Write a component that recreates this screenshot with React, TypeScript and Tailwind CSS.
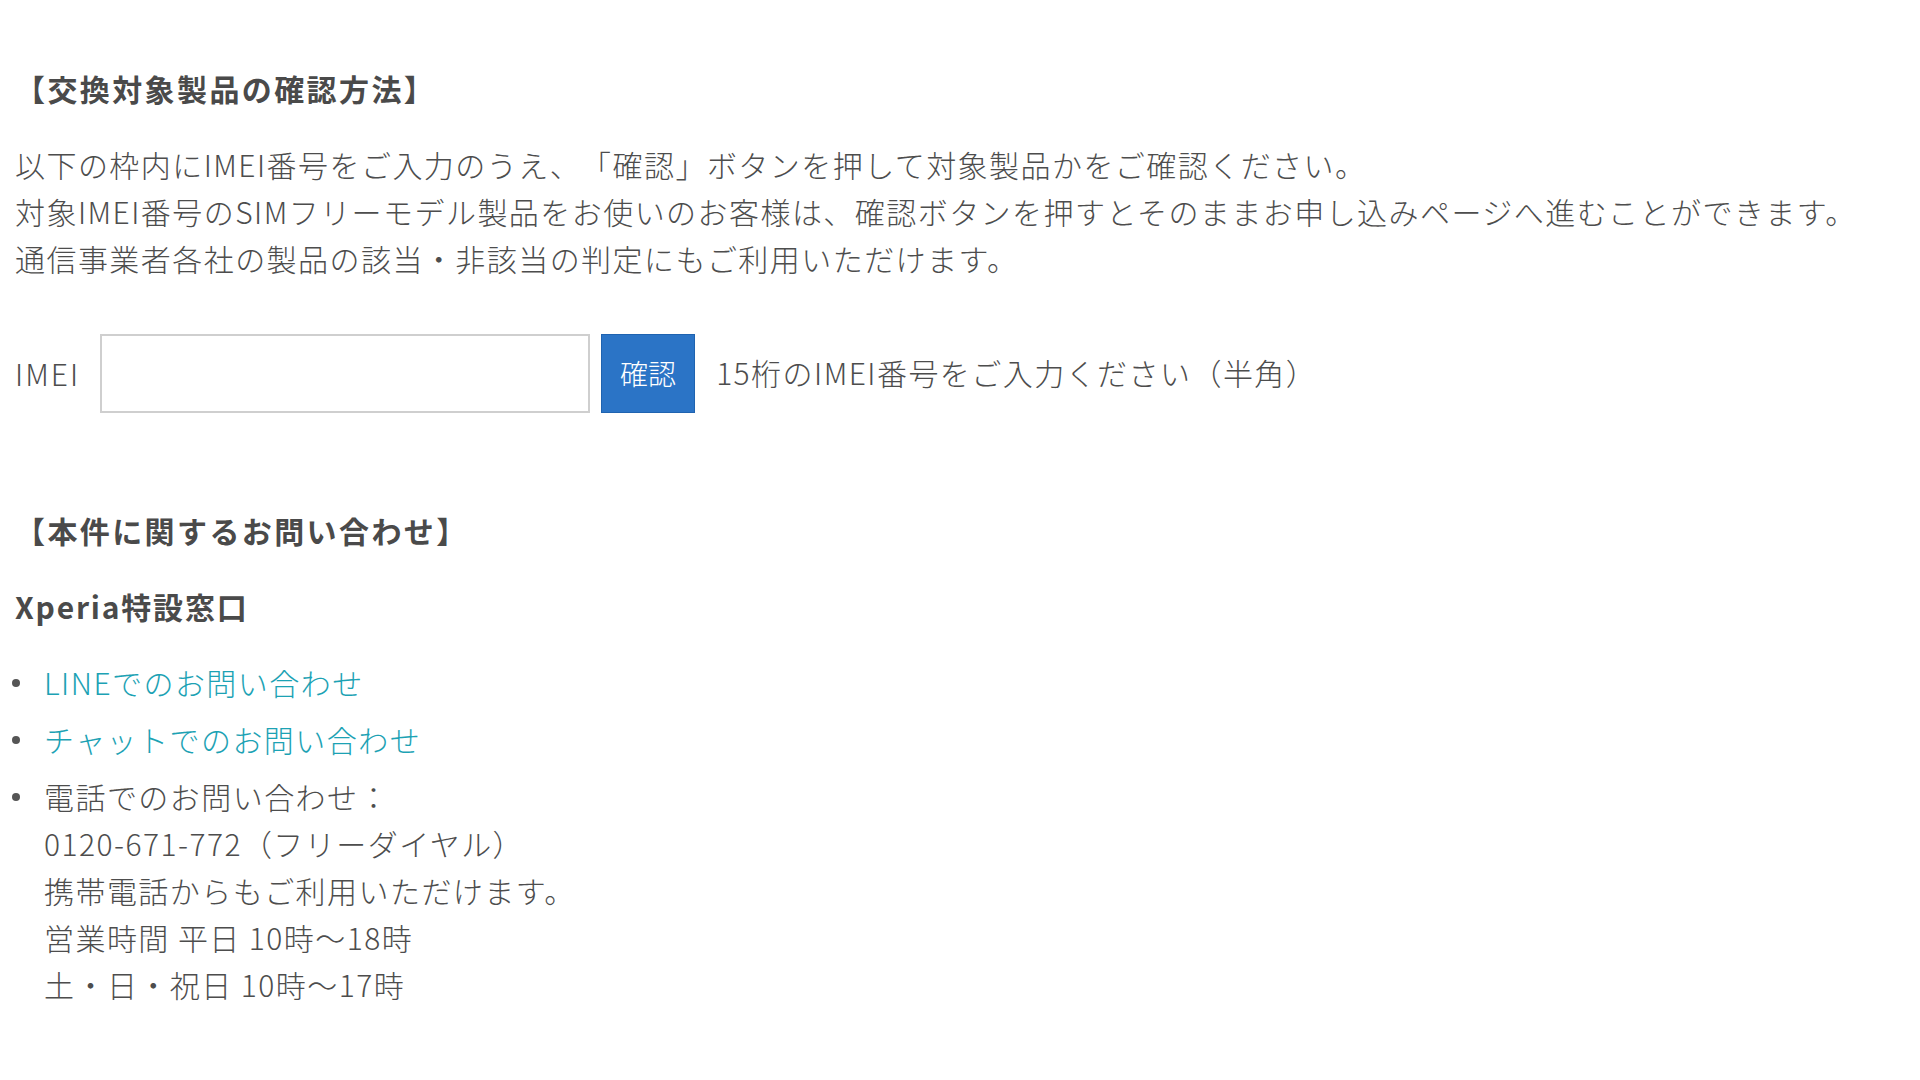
import React from "react";

const font = {
  fontFamily: '"Noto Sans CJK JP", "Noto Sans", sans-serif',
};

function Bullet() {
  return (
    <span className="flex h-[47px] w-[29px] shrink-0 items-center">
      <span className="-ml-[3.5px] h-[8px] w-[8px] rounded-full bg-[#555]" />
    </span>
  );
}

export default function App() {
  return (
    <div
      className="min-h-[1080px] w-[1920px] bg-white px-[15px] pt-[65px] text-[30px] leading-[47px] tracking-[1.45px] text-[#4d4d4d] [text-spacing-trim:space-all]"
      style={font}
    >
      <h2 className="font-bold text-[30px] leading-[47px] tracking-[2.4px] text-[#4a4a4a]">
        【交換対象製品の確認方法】
      </h2>
      <p className="mt-[29px] font-light">
        以下の枠内にIMEI番号をご入力のうえ、「確認」ボタンを押して対象製品かをご確認ください。
        <br />
        対象IMEI番号のSIMフリーモデル製品をお使いのお客様は、確認ボタンを押すとそのままお申し込みページへ進むことができます。
        <br />
        通信事業者各社の製品の該当・非該当の判定にもご利用いただけます。
      </p>

      <div className="mt-[52px] flex items-center">
        <span className="font-light tracking-[2px]">IMEI</span>
        <input
          type="text"
          className="ml-[20px] h-[79px] w-[490px] border-2 border-[#cfcfcf] bg-white outline-none"
        />
        <button className="ml-[11px] h-[79px] w-[94px] border border-[#1f63b0] bg-[#2b74c6] text-[28px] font-light tracking-[0px] text-white">
          確認
        </button>
        <span className="ml-[21px] -mt-[3px] font-light">15桁のIMEI番号をご入力ください（半角）</span>
      </div>

      <h2 className="mt-[94px] font-bold text-[30px] leading-[47px] tracking-[2.4px] text-[#4a4a4a]">
        【本件に関するお問い合わせ】
      </h2>
      <h3 className="mt-[29px] font-bold text-[30px] leading-[47px] tracking-[1.8px] text-[#4a4a4a]">
        Xperia特設窓口
      </h3>

      <ul className="mt-[29px] font-light">
        <li className="flex">
          <Bullet />
          <a href="#" className="text-[#1ca2b4]">LINEでのお問い合わせ</a>
        </li>
        <li className="mt-[10px] flex">
          <Bullet />
          <a href="#" className="text-[#1ca2b4]">チャットでのお問い合わせ</a>
        </li>
        <li className="mt-[10px] flex">
          <Bullet />
          <div>
            電話でのお問い合わせ：
            <br />
            0120-671-772（フリーダイヤル）
            <br />
            携帯電話からもご利用いただけます。
            <br />
            営業時間 平日 10時～18時
            <br />
            土・日・祝日 10時～17時
          </div>
        </li>
      </ul>
    </div>
  );
}
